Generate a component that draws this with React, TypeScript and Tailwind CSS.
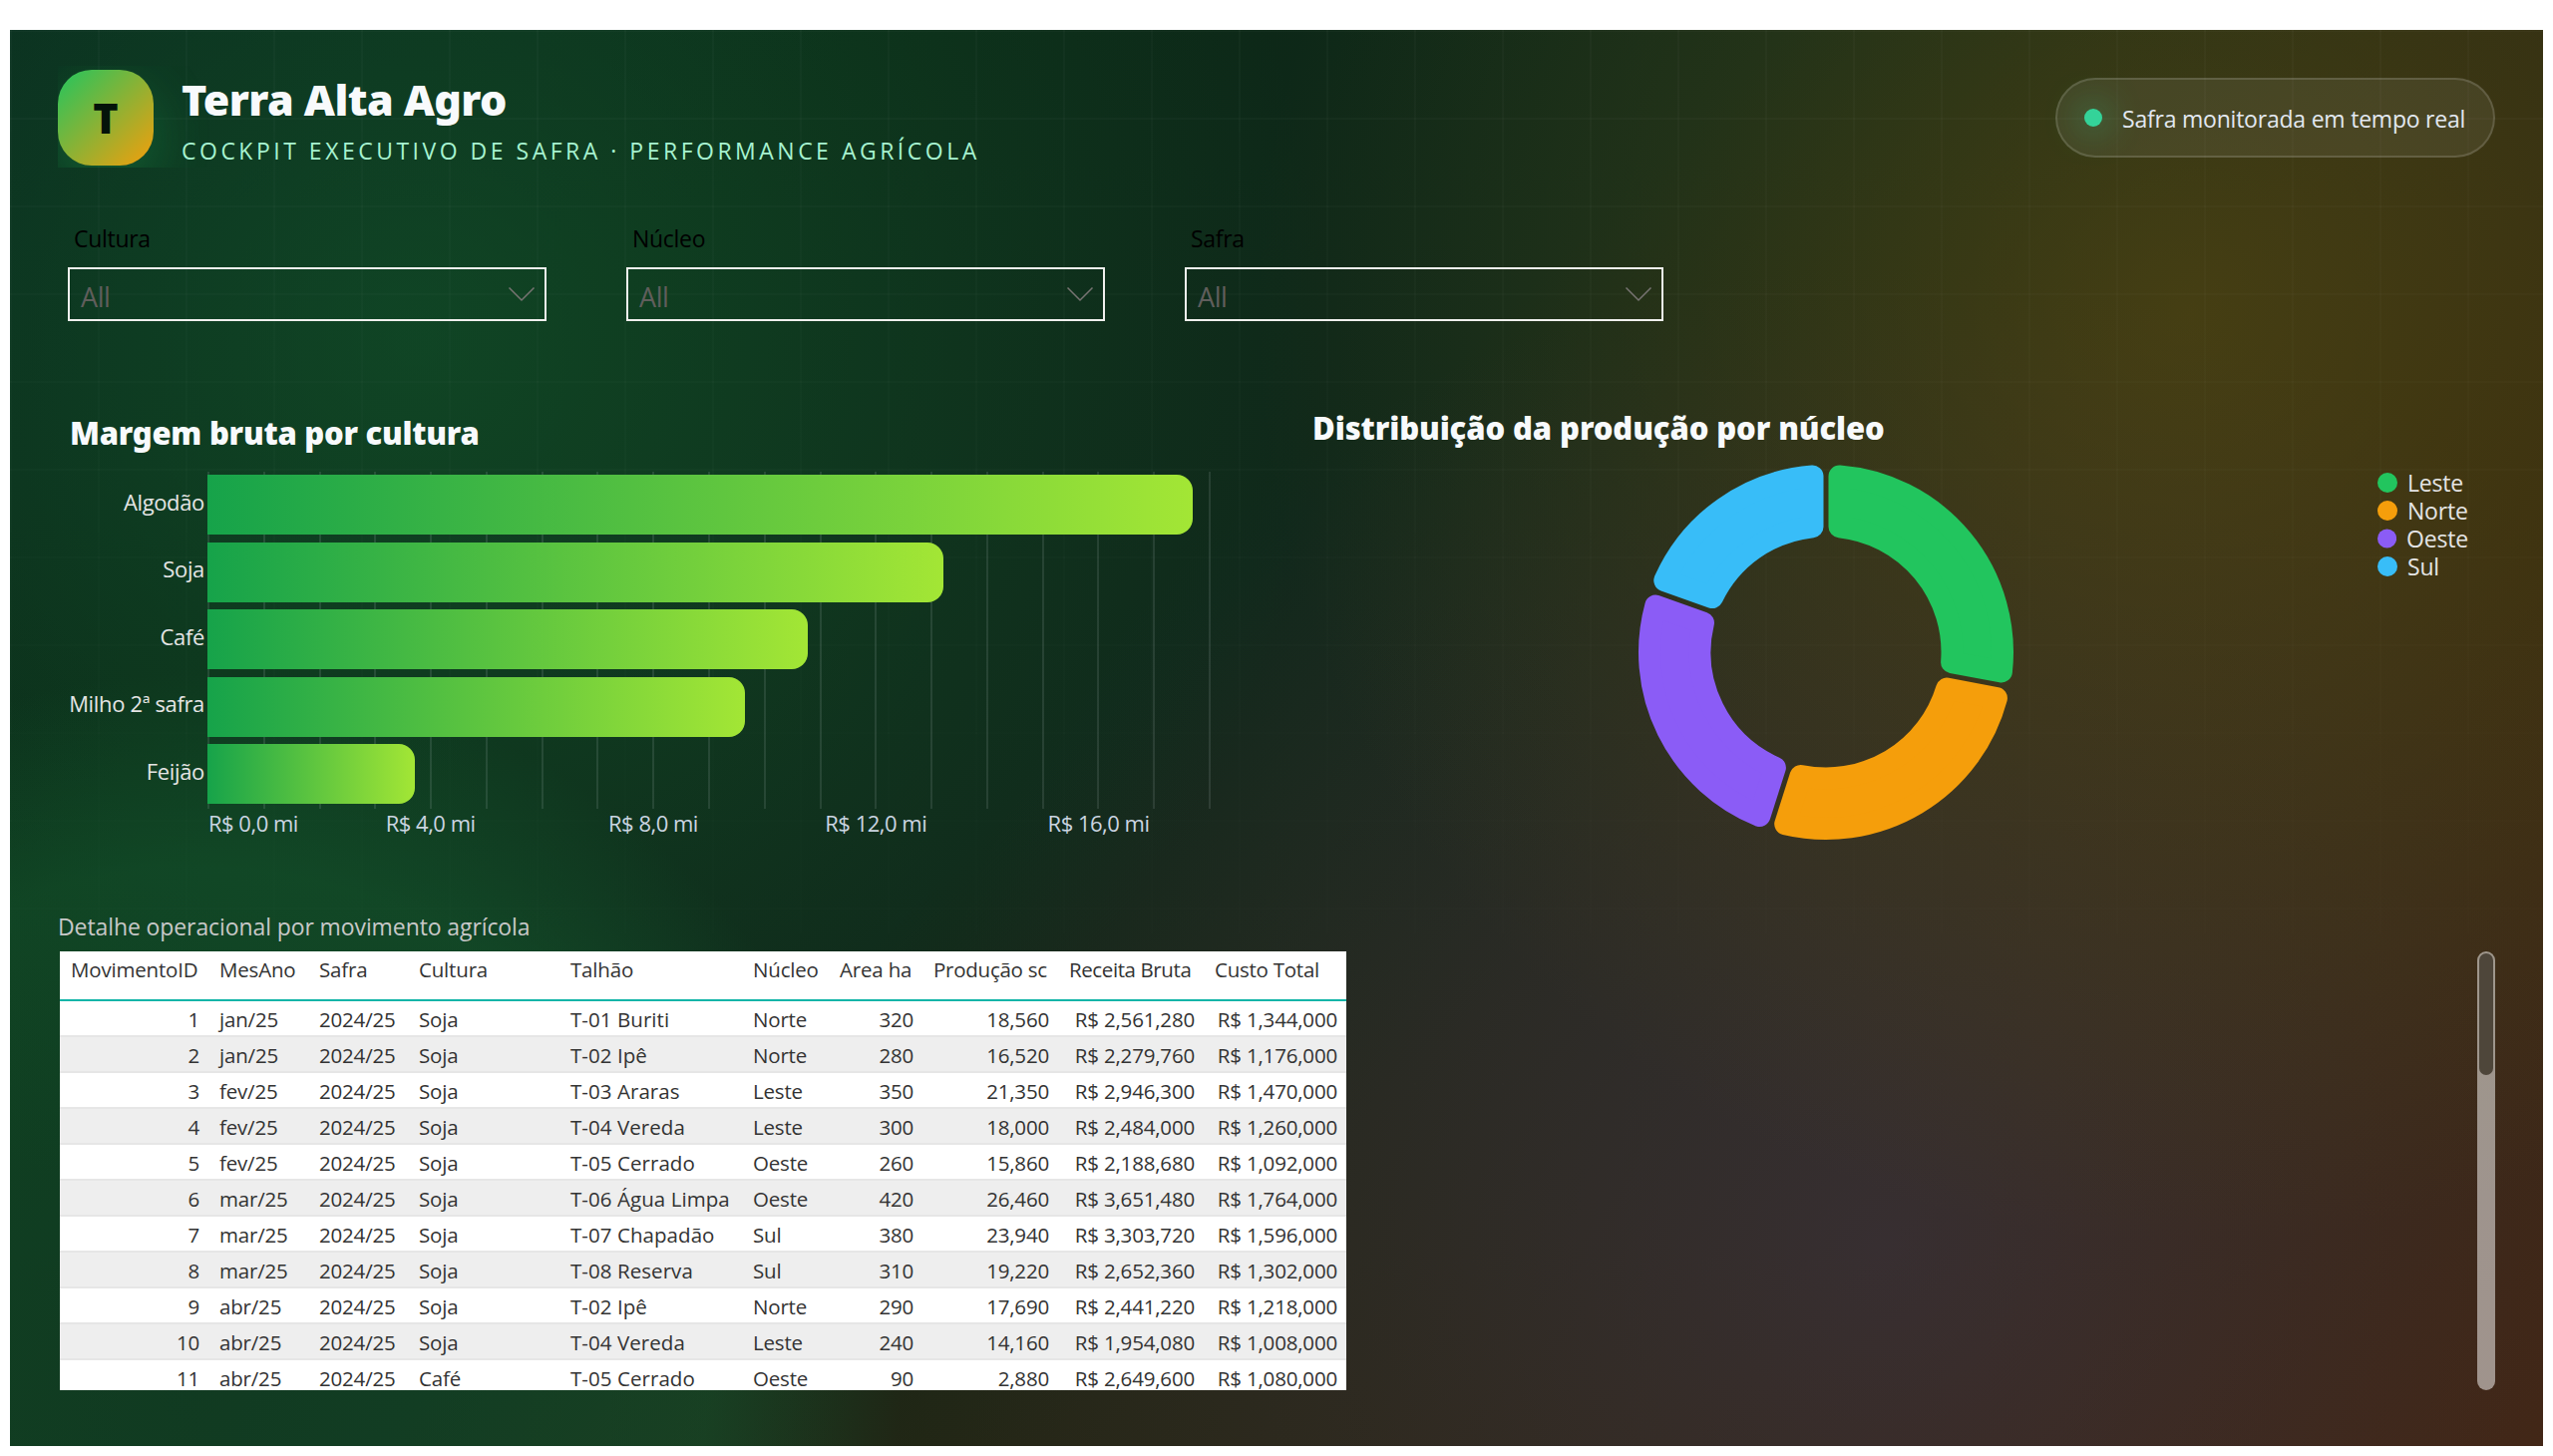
import React from 'react';

// Filtros do topo
const filtros = ['Cultura', 'Núcleo', 'Safra'];

// Margem bruta por cultura (largura da barra em px)
const barras = [
  { nome: 'Algodão', largura: 988 },
  { nome: 'Soja', largura: 738 },
  { nome: 'Café', largura: 602 },
  { nome: 'Milho 2ª safra', largura: 538.5 },
  { nome: 'Feijão', largura: 208 },
];

const eixo = ['R$ 4,0 mi', 'R$ 8,0 mi', 'R$ 12,0 mi', 'R$ 16,0 mi'];

// Ângulos em graus, sentido horário a partir do topo
const nucleos = [
  { nome: 'Leste', cor: '#22c55e', inicio: 0, fim: 100.7 },
  { nome: 'Norte', cor: '#f59e0b', inicio: 100.7, fim: 197.7 },
  { nome: 'Oeste', cor: '#8b5cf6', inicio: 197.7, fim: 289.6 },
  { nome: 'Sul', cor: '#38bdf8', inicio: 289.6, fim: 360 },
];

const colunas = [
  { titulo: 'MovimentoID', classe: 'justify-end', cab: '' },
  { titulo: 'MesAno', classe: '', cab: '' },
  { titulo: 'Safra', classe: '', cab: '' },
  { titulo: 'Cultura', classe: '', cab: '' },
  { titulo: 'Talhão', classe: 'tracking-[0.06px]', cab: '' },
  { titulo: 'Núcleo', classe: '', cab: '' },
  { titulo: 'Area ha', classe: 'justify-end', cab: '' },
  { titulo: 'Produção sc', classe: 'justify-end', cab: 'tracking-[-0.25px]' },
  { titulo: 'Receita Bruta', classe: 'justify-end', cab: 'tracking-[-0.4px]' },
  { titulo: 'Custo Total', classe: 'justify-end', cab: 'tracking-[-0.25px]' },
];

const movimentos = [
  ['1', 'jan/25', '2024/25', 'Soja', 'T-01 Buriti', 'Norte', '320', '18,560', 'R$ 2,561,280', 'R$ 1,344,000'],
  ['2', 'jan/25', '2024/25', 'Soja', 'T-02 Ipê', 'Norte', '280', '16,520', 'R$ 2,279,760', 'R$ 1,176,000'],
  ['3', 'fev/25', '2024/25', 'Soja', 'T-03 Araras', 'Leste', '350', '21,350', 'R$ 2,946,300', 'R$ 1,470,000'],
  ['4', 'fev/25', '2024/25', 'Soja', 'T-04 Vereda', 'Leste', '300', '18,000', 'R$ 2,484,000', 'R$ 1,260,000'],
  ['5', 'fev/25', '2024/25', 'Soja', 'T-05 Cerrado', 'Oeste', '260', '15,860', 'R$ 2,188,680', 'R$ 1,092,000'],
  ['6', 'mar/25', '2024/25', 'Soja', 'T-06 Água Limpa', 'Oeste', '420', '26,460', 'R$ 3,651,480', 'R$ 1,764,000'],
  ['7', 'mar/25', '2024/25', 'Soja', 'T-07 Chapadão', 'Sul', '380', '23,940', 'R$ 3,303,720', 'R$ 1,596,000'],
  ['8', 'mar/25', '2024/25', 'Soja', 'T-08 Reserva', 'Sul', '310', '19,220', 'R$ 2,652,360', 'R$ 1,302,000'],
  ['9', 'abr/25', '2024/25', 'Soja', 'T-02 Ipê', 'Norte', '290', '17,690', 'R$ 2,441,220', 'R$ 1,218,000'],
  ['10', 'abr/25', '2024/25', 'Soja', 'T-04 Vereda', 'Leste', '240', '14,160', 'R$ 1,954,080', 'R$ 1,008,000'],
  ['11', 'abr/25', '2024/25', 'Café', 'T-05 Cerrado', 'Oeste', '90', '2,880', 'R$ 2,649,600', 'R$ 1,080,000'],
];

const GRID_TABELA =
  'grid grid-cols-[149px_100px_100px_152px_183px_87px_94px_136px_146px_143px] pl-px text-[20.5px] font-[370] tracking-[-0.18px] text-[#333333]';

/**
 * Fatia do donut com cantos arredondados.
 * O contorno é recuado em `r` e depois preenchido por um traço de largura 2r.
 */
const fatia = (inicio: number, fim: number) => {
  const r = 11;
  const externo = 188 - r;
  const interno = 115.5 + r;
  const desvio = 2.5 + r;
  const rad = (g: number) => (g * Math.PI) / 180;
  const ponto = (raio: number, ang: number) =>
    `${(190 + raio * Math.sin(ang)).toFixed(2)} ${(190 - raio * Math.cos(ang)).toFixed(2)}`;
  const de = Math.asin(desvio / externo);
  const di = Math.asin(desvio / interno);
  return [
    `M ${ponto(externo, rad(inicio) + de)}`,
    `A ${externo} ${externo} 0 0 1 ${ponto(externo, rad(fim) - de)}`,
    `L ${ponto(interno, rad(fim) - di)}`,
    `A ${interno} ${interno} 0 0 0 ${ponto(interno, rad(inicio) + di)}`,
    'Z',
  ].join(' ');
};

const Cabecalho: React.FC = () => (
  <header className="flex h-[102px] items-start justify-between pr-12 pl-12">
    <div className="flex h-[102px] items-start gap-7 overflow-hidden pt-1">
      <div className="flex size-24 shrink-0 items-center justify-center rounded-[34px] bg-linear-135/srgb from-[#22c55e] to-[#f59e0b] pb-0.5 shadow-[0_20px_56px_rgba(34,197,94,0.28)]">
        <span className="text-[43px] leading-none font-extrabold text-[#04130a]">T</span>
      </div>
      <div className="pt-1.5">
        <h1 className="h-12 font-['Noto_Sans',sans-serif] text-[43px] leading-[48px] font-black tracking-[-0.6px] text-[#f8fafc]">
          Terra Alta Agro
        </h1>
        <p className="mt-[11px] text-[23px] leading-8 tracking-[3.5px] whitespace-nowrap text-[#a7f3d0]">
          COCKPIT EXECUTIVO DE SAFRA · PERFORMANCE AGRÍCOLA
        </p>
      </div>
    </div>
    <div className="mt-3 flex h-20 w-[441px] items-center rounded-[40px] border-2 border-white/14 bg-white/7 pl-[27px]">
      <span className="size-[18px] rounded-full bg-[#34d399] shadow-[0_0_36px_#34d399]" />
      <span className="ml-5 pt-0.5 text-[23px] tracking-[-0.22px] whitespace-nowrap text-[#e2e8f0]">
        Safra monitorada em tempo real
      </span>
    </div>
  </header>
);

const Filtro: React.FC<{ titulo: string }> = ({ titulo }) => (
  <div className="w-[480px]">
    <div className="h-[46px] pt-px pl-1.5 text-[23px] leading-8 tracking-[-0.3px] text-black">{titulo}</div>
    <div className="flex h-[54px] items-center justify-between border-2 border-[#f0f0ee] pr-[9px] pl-[11px]">
      <span className="pt-1 text-[27px] leading-none tracking-[-0.4px] text-[#605e5c]">All</span>
      <svg width="28" height="16" viewBox="0 0 28 16" fill="none" stroke="#777472" strokeWidth="1.5">
        <path d="M1.5 1.5 14 14 26.5 1.5" />
      </svg>
    </div>
  </div>
);

const GraficoBarras: React.FC = () => (
  <section className="w-[1249px] pt-[33px] pl-[60px]">
    <h2 className="h-[60px] font-['Noto_Sans',sans-serif] text-[31px] leading-[42px] font-black tracking-[-0.25px] text-[#f8fafc]">
      Margem bruta por cultura
    </h2>
    <div className="flex">
      <div className="flex w-[138px] shrink-0 flex-col gap-[7.6px] pr-[3px]">
        {barras.map((b) => (
          <div
            key={b.nome}
            className="flex h-[60px] items-center justify-end text-[22px] tracking-[-0.35px] whitespace-nowrap text-[#e5e5e5]"
          >
            {b.nome}
          </div>
        ))}
      </div>
      <div className="w-[1007px]">
        <div className="flex h-[338px] flex-col gap-[7.6px] bg-[repeating-linear-gradient(90deg,rgba(226,232,240,0.11)_0,rgba(226,232,240,0.11)_2px,transparent_2px,transparent_55.78px)] pt-[3px]">
          {barras.map((b) => (
            <div
              key={b.nome}
              className="h-[60px] shrink-0 rounded-r-2xl bg-[linear-gradient(90deg,#16a34a,#a3e635)]"
              style={{ width: b.largura }}
            />
          ))}
        </div>
        <div className="flex text-[22px] leading-7 tracking-[-0.5px] whitespace-nowrap text-[#cbd5e1]">
          <span className="w-[112px] pl-px">R$ 0,0 mi</span>
          {eixo.map((e) => (
            <span key={e} className="w-[223.3px] shrink-0 text-center">
              {e}
            </span>
          ))}
        </div>
      </div>
    </div>
  </section>
);

const GraficoDonut: React.FC = () => (
  <section className="flex flex-1 flex-col pt-7 pl-[57px]">
    <h2 className="h-14 font-['Noto_Sans',sans-serif] text-[31px] leading-[42px] font-black tracking-[-0.1px] text-[#f8fafc]">
      Distribuição da produção por núcleo
    </h2>
    <div className="flex justify-between pr-[75px]">
      <svg className="ml-[325px]" width="380" height="380" viewBox="0 0 380 380">
        {nucleos.map((n) => (
          <path
            key={n.nome}
            d={fatia(n.inicio, n.fim)}
            fill={n.cor}
            stroke={n.cor}
            strokeWidth="22"
            strokeLinejoin="round"
          />
        ))}
      </svg>
      <ul className="mt-1.5 w-[91px]">
        {nucleos.map((n) => (
          <li key={n.nome} className="flex h-7 items-center gap-2.5 text-[23px] leading-7 tracking-[-0.2px] text-[#e5e5e5]">
            <svg width="20" height="20" viewBox="0 0 20 20">
              <circle cx="10" cy="10" r="10" fill={n.cor} />
            </svg>
            {n.nome}
          </li>
        ))}
      </ul>
    </div>
  </section>
);

const Tabela: React.FC = () => (
  <section className="pr-12 pl-12">
    <h3 className="h-[42px] pt-px text-[23px] leading-8 tracking-[-0.1px] text-[#c8c8c8]">
      Detalhe operacional por movimento agrícola
    </h3>
    <div className="flex h-[440px] justify-between">
      <div className="ml-0.5 w-[1290px] bg-white">
        <div className={`${GRID_TABELA} h-[50px] border-b-2 border-[#11b5a8]`}>
          {colunas.map((c) => (
            <div key={c.titulo} className={`pt-1 pl-2.5 leading-[29px] whitespace-nowrap ${c.cab}`}>
              {c.titulo}
            </div>
          ))}
        </div>
        {movimentos.map((linha, i) => (
          <div
            key={linha[0]}
            className={`${GRID_TABELA} border-[#e6e6e6] ${i === movimentos.length - 1 ? 'h-[30px]' : 'h-9 border-b-2'} ${i % 2 ? 'bg-[#eeeeee]' : 'bg-white'}`}
          >
            {linha.map((valor, c) => (
              <div
                key={colunas[c].titulo}
                className={`flex px-2.5 pt-[7px] leading-[22px] whitespace-nowrap ${colunas[c].classe}`}
              >
                {valor}
              </div>
            ))}
          </div>
        ))}
      </div>
      {/* Barra de rolagem */}
      <div className="w-[18px] rounded-full bg-white/50 p-0.5">
        <div className="h-[122px] rounded-full bg-[#4e463a]" />
      </div>
    </div>
  </section>
);

const App: React.FC = () => {
  return (
    <div className="h-[1460px] w-[2560px] bg-white px-2.5 pt-[30px] font-['Open_Sans','Noto_Sans',sans-serif]">
      <div className="relative h-[1420px] w-[2540px] overflow-hidden bg-[radial-gradient(circle_at_16%_22%,rgba(22,101,52,0.48),transparent_38%),radial-gradient(circle_at_86%_20%,rgba(108,92,18,0.45),transparent_38%),radial-gradient(circle_at_74%_86%,rgba(66,62,110,0.36),transparent_44%),linear-gradient(135deg,#09261c_0%,#0b2816_22%,#10281a_45%,#252614_62%,#31260f_78%,#42240c_100%)]">
        {/* Mancha verde inferior */}
        <div className="absolute top-[600px] -left-[560px] size-[1500px] rounded-full bg-[radial-gradient(circle_closest-side,rgba(22,101,52,0.3)_0%,rgba(22,101,52,0.4)_68%,rgba(22,101,52,0)_94%)]" />
        {/* Malha de fundo */}
        <div className="absolute inset-0 bg-[linear-gradient(rgba(255,255,255,0.025)_2px,transparent_2px),linear-gradient(90deg,rgba(255,255,255,0.025)_2px,transparent_2px)] bg-[size:88px_88px] [mask-image:linear-gradient(#000,transparent_85%)]" />

        <main className="relative flex flex-col pt-9">
          <Cabecalho />
          <div className="mt-[54px] flex gap-20 pl-[58px]">
            {filtros.map((f) => (
              <Filtro key={f} titulo={f} />
            ))}
          </div>
          <div className="mt-[58px] flex h-[532px]">
            <GraficoBarras />
            <GraficoDonut />
          </div>
          <Tabela />
        </main>
      </div>
    </div>
  );
};

export default App;
